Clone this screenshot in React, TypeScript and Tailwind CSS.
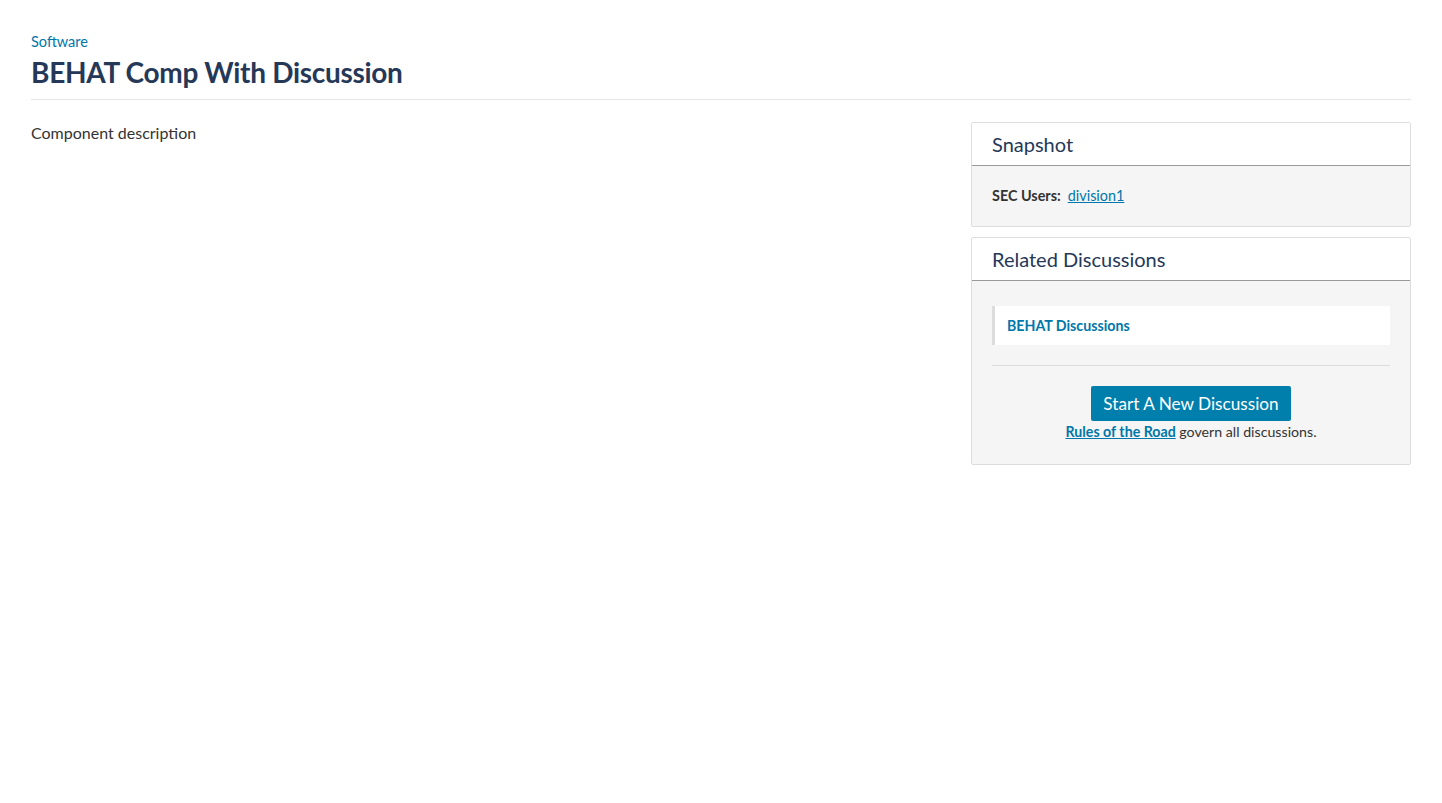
import React from 'react';

const font = { fontFamily: 'Lato, "Noto Sans", sans-serif' };

function Panel({ title, children }: { title: string; children: React.ReactNode }) {
  return (
    <div className="border border-[#dddddd] rounded-[2px] bg-[#f5f5f5]">
      <div className="bg-white border-b border-[#999999] px-5 h-[43px] flex items-center">
        <h3 className="text-[20px] text-[#253858] leading-none">{title}</h3>
      </div>
      <div className="px-5">{children}</div>
    </div>
  );
}

export default function App() {
  return (
    <div className="min-h-screen bg-white px-[31px] pt-[32px]" style={font}>
      {/* Page header */}
      <div className="border-b border-[#e5e5e5] pb-[9px]">
        <a href="#" className="text-[14.5px] text-[#0077aa] leading-[20px] block">Software</a>
        <h1 className="text-[28px] font-bold text-[#253858] leading-[36px] tracking-[-0.3px] pt-[2px]">
          BEHAT Comp With Discussion
        </h1>
      </div>

      <div className="flex gap-[31px] pt-[22px]">
        <div className="flex-1">
          <p className="text-[16px] text-[#333333] leading-[22px]">Component description</p>
        </div>

        <aside className="w-[440px] flex flex-col gap-[10px]">
          <Panel title="Snapshot">
            <div className="py-[20px] text-[14.4px] leading-[20px] text-[#333333]">
              <span className="font-bold">SEC Users:</span>
              <a href="#" className="ml-[7px] text-[#0077aa] underline">division1</a>
            </div>
          </Panel>

          <Panel title="Related Discussions">
            <div className="pt-[25px] pb-[22px]">
              <div className="bg-white border-l-[3px] border-[#dddddd] h-[39px] flex items-center pl-[12px]">
                <a href="#" className="text-[14.2px] font-bold text-[#0077aa]">BEHAT Discussions</a>
              </div>
              <div className="border-t border-[#dddddd] mt-[20px] pt-[20px] flex flex-col items-center">
                <button className="bg-[#007eac] text-white text-[17.2px] h-[35px] px-[12px] rounded-[2px] leading-none">
                  Start A New Discussion
                </button>
                <p className="text-[14.2px] text-[#333333] leading-[20px] mt-[1px]">
                  <a href="#" className="font-bold text-[#0077aa] underline">Rules of the Road</a> govern all discussions.
                </p>
              </div>
            </div>
          </Panel>
        </aside>
      </div>
    </div>
  );
}
